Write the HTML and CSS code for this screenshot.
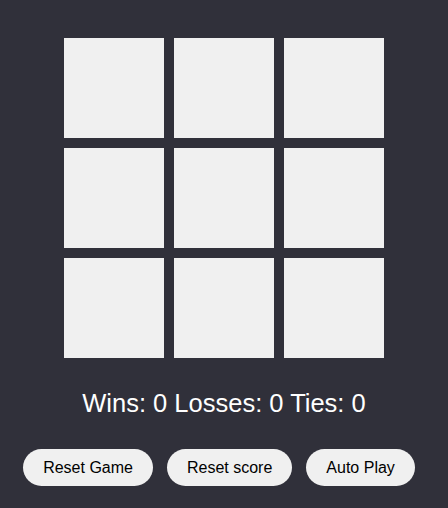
FILE: index.html
```html
<!DOCTYPE html>
<html>
<head>
<meta charset="utf-8">
<link rel="stylesheet" href="styles.css">
</head>
<body>
<div class="board">
  <div class="cell"></div><div class="cell"></div><div class="cell"></div>
  <div class="cell"></div><div class="cell"></div><div class="cell"></div>
  <div class="cell"></div><div class="cell"></div><div class="cell"></div>
</div>
<p class="score">Wins: 0 Losses: 0 Ties: 0</p>
<div class="controls">
  <button class="btn">Reset Game</button>
  <button class="btn">Reset score</button>
  <button class="btn">Auto Play</button>
</div>
</body>
</html>
```
FILE: styles.css
```css
html, body {
  margin: 0;
  padding: 0;
  background: #30303a;
}
body {
  font-family: "Liberation Sans", Arial, sans-serif;
  padding-top: 38px;
  height: 508px;
  box-sizing: border-box;
}
.board {
  display: grid;
  grid-template-columns: repeat(3, 100px);
  grid-auto-rows: 100px;
  gap: 10px;
  justify-content: center;
}
.cell {
  background: #f0f0f0;
}
.score {
  margin: 30px 0 0;
  color: #ffffff;
  font-size: 25.5px;
  line-height: 30px;
  text-align: center;
}
.controls {
  display: flex;
  justify-content: center;
  gap: 14px;
  padding-right: 10px;
  margin-top: 31px;
}
.btn {
  height: 37px;
  padding: 0 20px;
  border: none;
  border-radius: 19px;
  background: #f0f0f0;
  color: #000;
  font-family: "Liberation Sans", Arial, sans-serif;
  font-size: 16px;
}
```
